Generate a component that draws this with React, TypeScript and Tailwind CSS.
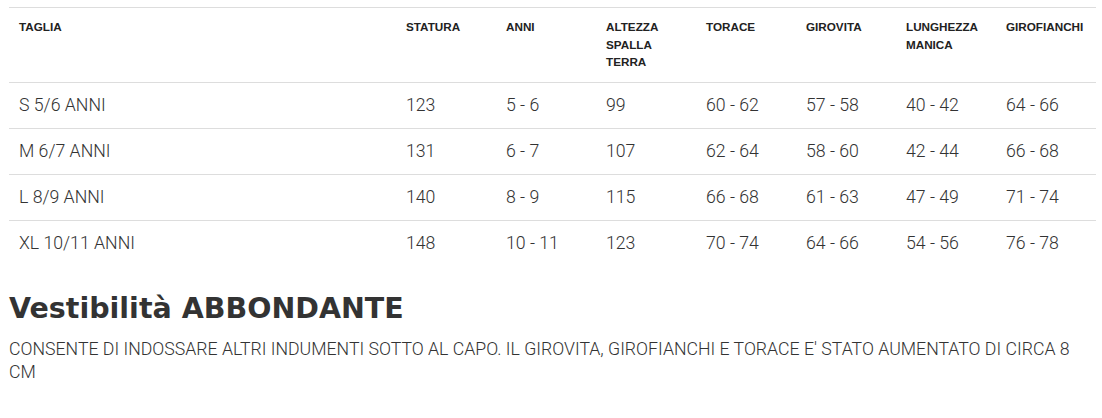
import React from "react";

const headers = [
  ["TAGLIA"],
  ["STATURA"],
  ["ANNI"],
  ["ALTEZZA", "SPALLA", "TERRA"],
  ["TORACE"],
  ["GIROVITA"],
  ["LUNGHEZZA", "MANICA"],
  ["GIROFIANCHI"],
];

const rows = [
  ["S 5/6 ANNI", "123", "5 - 6", "99", "60 - 62", "57 - 58", "40 - 42", "64 - 66"],
  ["M 6/7 ANNI", "131", "6 - 7", "107", "62 - 64", "58 - 60", "42 - 44", "66 - 68"],
  ["L 8/9 ANNI", "140", "8 - 9", "115", "66 - 68", "61 - 63", "47 - 49", "71 - 74"],
  ["XL 10/11 ANNI", "148", "10 - 11", "123", "70 - 74", "64 - 66", "54 - 56", "76 - 78"],
];

export default function App() {
  return (
    <div className="w-[1102px] h-[418px] bg-white overflow-hidden pl-[9px] pt-[7px]">
      <table className="w-[1087px] border-collapse table-fixed">
        <colgroup>
          <col className="w-[387px]" />
          {[0, 1, 2, 3, 4, 5, 6].map((i) => (
            <col key={i} className="w-[100px]" />
          ))}
        </colgroup>
        <thead>
          <tr className="border-t border-b border-[#dddddd]">
            {headers.map((h, i) => (
              <th
                key={i}
                className="text-left align-top pl-[10px] pr-0 pt-[10px] pb-[11px] text-[11.7px] leading-[17.5px] font-bold text-[#222222] h-[75px]"
                style={{ fontFamily: '"Liberation Sans", Arial, sans-serif' }}
              >
                {h.map((l, j) => (
                  <div key={j}>{l}</div>
                ))}
              </th>
            ))}
          </tr>
        </thead>
        <tbody>
          {rows.map((r, i) => (
            <tr key={i} className={i < rows.length - 1 ? "border-b border-[#dddddd]" : ""}>
              {r.map((c, j) => (
                <td
                  key={j}
                  className="pl-[10px] h-[46px] align-middle text-[17.7px] font-light text-[#333333] font-['Roboto',sans-serif]"
                >
                  {c}
                </td>
              ))}
            </tr>
          ))}
        </tbody>
      </table>
      <h2 className="mt-[24px] text-[28.5px] leading-[36px] font-bold text-[#333333] font-['DejaVu_Sans',sans-serif]">
        Vestibilità ABBONDANTE
      </h2>
      <p className="mt-[11px] w-[1087px] text-[17.7px] leading-[23px] font-light text-[#333333] font-['Roboto',sans-serif]">
        CONSENTE DI INDOSSARE ALTRI INDUMENTI SOTTO AL CAPO. IL GIROVITA, GIROFIANCHI E TORACE E' STATO AUMENTATO DI CIRCA 8 CM
      </p>
    </div>
  );
}
